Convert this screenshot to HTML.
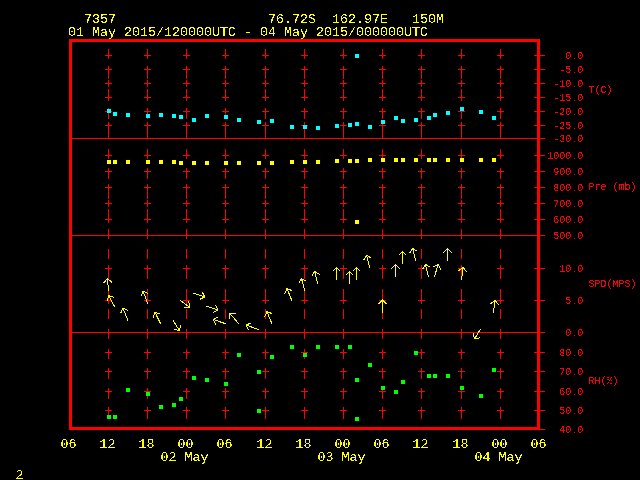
<!DOCTYPE html>
<html><head><meta charset="utf-8"><title>Meteogram 7357</title>
<style>
html,body{margin:0;padding:0;background:#000;overflow:hidden}
svg{display:block}
text{font-family:"Liberation Mono","DejaVu Sans Mono",monospace;white-space:pre}
.y{fill:#ffff00;font-size:13.333px}
.r{fill:#ff0000;font-size:10px}
</style></head><body>
<svg width="640" height="480" viewBox="0 0 640 480">
<defs><filter id="crisp" x="0" y="0" width="640" height="480" filterUnits="userSpaceOnUse" color-interpolation-filters="sRGB"><feComponentTransfer><feFuncA type="discrete" tableValues="0 1"/></feComponentTransfer></filter></defs>
<rect x="0" y="0" width="640" height="480" fill="#000"/>
<g shape-rendering="crispEdges">
<rect x="69" y="39" width="471" height="3" fill="#ff0000"/>
<rect x="69" y="427" width="471" height="3" fill="#ff0000"/>
<rect x="69" y="39" width="3" height="391" fill="#ff0000"/>
<rect x="537" y="39" width="3" height="391" fill="#ff0000"/>
<rect x="69" y="138" width="471" height="1" fill="#ff0000"/>
<rect x="69" y="235" width="471" height="1" fill="#ff0000"/>
<rect x="69" y="332" width="471" height="1" fill="#ff0000"/>
<rect x="108" y="49" width="1" height="10" fill="#ff0000"/>
<rect x="108" y="69" width="1" height="10" fill="#ff0000"/>
<rect x="108" y="89" width="1" height="10" fill="#ff0000"/>
<rect x="108" y="109" width="1" height="10" fill="#ff0000"/>
<rect x="108" y="129" width="1" height="10" fill="#ff0000"/>
<rect x="108" y="149" width="1" height="10" fill="#ff0000"/>
<rect x="108" y="169" width="1" height="10" fill="#ff0000"/>
<rect x="108" y="189" width="1" height="10" fill="#ff0000"/>
<rect x="108" y="209" width="1" height="10" fill="#ff0000"/>
<rect x="108" y="229" width="1" height="10" fill="#ff0000"/>
<rect x="108" y="249" width="1" height="10" fill="#ff0000"/>
<rect x="108" y="269" width="1" height="10" fill="#ff0000"/>
<rect x="108" y="289" width="1" height="10" fill="#ff0000"/>
<rect x="108" y="309" width="1" height="10" fill="#ff0000"/>
<rect x="108" y="329" width="1" height="10" fill="#ff0000"/>
<rect x="108" y="349" width="1" height="10" fill="#ff0000"/>
<rect x="108" y="369" width="1" height="10" fill="#ff0000"/>
<rect x="108" y="389" width="1" height="10" fill="#ff0000"/>
<rect x="108" y="409" width="1" height="10" fill="#ff0000"/>
<rect x="105" y="55" width="7" height="1" fill="#ff0000"/>
<rect x="108" y="52" width="1" height="7" fill="#ff0000"/>
<rect x="105" y="69" width="7" height="1" fill="#ff0000"/>
<rect x="108" y="66" width="1" height="7" fill="#ff0000"/>
<rect x="105" y="83" width="7" height="1" fill="#ff0000"/>
<rect x="108" y="80" width="1" height="7" fill="#ff0000"/>
<rect x="105" y="97" width="7" height="1" fill="#ff0000"/>
<rect x="108" y="94" width="1" height="7" fill="#ff0000"/>
<rect x="105" y="111" width="7" height="1" fill="#ff0000"/>
<rect x="108" y="108" width="1" height="7" fill="#ff0000"/>
<rect x="105" y="125" width="7" height="1" fill="#ff0000"/>
<rect x="108" y="122" width="1" height="7" fill="#ff0000"/>
<rect x="105" y="155" width="7" height="1" fill="#ff0000"/>
<rect x="108" y="152" width="1" height="7" fill="#ff0000"/>
<rect x="105" y="171" width="7" height="1" fill="#ff0000"/>
<rect x="108" y="168" width="1" height="7" fill="#ff0000"/>
<rect x="105" y="187" width="7" height="1" fill="#ff0000"/>
<rect x="108" y="184" width="1" height="7" fill="#ff0000"/>
<rect x="105" y="203" width="7" height="1" fill="#ff0000"/>
<rect x="108" y="200" width="1" height="7" fill="#ff0000"/>
<rect x="105" y="219" width="7" height="1" fill="#ff0000"/>
<rect x="108" y="216" width="1" height="7" fill="#ff0000"/>
<rect x="105" y="268" width="7" height="1" fill="#ff0000"/>
<rect x="108" y="265" width="1" height="7" fill="#ff0000"/>
<rect x="105" y="300" width="7" height="1" fill="#ff0000"/>
<rect x="108" y="297" width="1" height="7" fill="#ff0000"/>
<rect x="105" y="352" width="7" height="1" fill="#ff0000"/>
<rect x="108" y="349" width="1" height="7" fill="#ff0000"/>
<rect x="105" y="371" width="7" height="1" fill="#ff0000"/>
<rect x="108" y="368" width="1" height="7" fill="#ff0000"/>
<rect x="105" y="391" width="7" height="1" fill="#ff0000"/>
<rect x="108" y="388" width="1" height="7" fill="#ff0000"/>
<rect x="105" y="410" width="7" height="1" fill="#ff0000"/>
<rect x="108" y="407" width="1" height="7" fill="#ff0000"/>
<rect x="147" y="49" width="1" height="10" fill="#ff0000"/>
<rect x="147" y="69" width="1" height="10" fill="#ff0000"/>
<rect x="147" y="89" width="1" height="10" fill="#ff0000"/>
<rect x="147" y="109" width="1" height="10" fill="#ff0000"/>
<rect x="147" y="129" width="1" height="10" fill="#ff0000"/>
<rect x="147" y="149" width="1" height="10" fill="#ff0000"/>
<rect x="147" y="169" width="1" height="10" fill="#ff0000"/>
<rect x="147" y="189" width="1" height="10" fill="#ff0000"/>
<rect x="147" y="209" width="1" height="10" fill="#ff0000"/>
<rect x="147" y="229" width="1" height="10" fill="#ff0000"/>
<rect x="147" y="249" width="1" height="10" fill="#ff0000"/>
<rect x="147" y="269" width="1" height="10" fill="#ff0000"/>
<rect x="147" y="289" width="1" height="10" fill="#ff0000"/>
<rect x="147" y="309" width="1" height="10" fill="#ff0000"/>
<rect x="147" y="329" width="1" height="10" fill="#ff0000"/>
<rect x="147" y="349" width="1" height="10" fill="#ff0000"/>
<rect x="147" y="369" width="1" height="10" fill="#ff0000"/>
<rect x="147" y="389" width="1" height="10" fill="#ff0000"/>
<rect x="147" y="409" width="1" height="10" fill="#ff0000"/>
<rect x="144" y="55" width="7" height="1" fill="#ff0000"/>
<rect x="147" y="52" width="1" height="7" fill="#ff0000"/>
<rect x="144" y="69" width="7" height="1" fill="#ff0000"/>
<rect x="147" y="66" width="1" height="7" fill="#ff0000"/>
<rect x="144" y="83" width="7" height="1" fill="#ff0000"/>
<rect x="147" y="80" width="1" height="7" fill="#ff0000"/>
<rect x="144" y="97" width="7" height="1" fill="#ff0000"/>
<rect x="147" y="94" width="1" height="7" fill="#ff0000"/>
<rect x="144" y="111" width="7" height="1" fill="#ff0000"/>
<rect x="147" y="108" width="1" height="7" fill="#ff0000"/>
<rect x="144" y="125" width="7" height="1" fill="#ff0000"/>
<rect x="147" y="122" width="1" height="7" fill="#ff0000"/>
<rect x="144" y="155" width="7" height="1" fill="#ff0000"/>
<rect x="147" y="152" width="1" height="7" fill="#ff0000"/>
<rect x="144" y="171" width="7" height="1" fill="#ff0000"/>
<rect x="147" y="168" width="1" height="7" fill="#ff0000"/>
<rect x="144" y="187" width="7" height="1" fill="#ff0000"/>
<rect x="147" y="184" width="1" height="7" fill="#ff0000"/>
<rect x="144" y="203" width="7" height="1" fill="#ff0000"/>
<rect x="147" y="200" width="1" height="7" fill="#ff0000"/>
<rect x="144" y="219" width="7" height="1" fill="#ff0000"/>
<rect x="147" y="216" width="1" height="7" fill="#ff0000"/>
<rect x="144" y="268" width="7" height="1" fill="#ff0000"/>
<rect x="147" y="265" width="1" height="7" fill="#ff0000"/>
<rect x="144" y="300" width="7" height="1" fill="#ff0000"/>
<rect x="147" y="297" width="1" height="7" fill="#ff0000"/>
<rect x="144" y="352" width="7" height="1" fill="#ff0000"/>
<rect x="147" y="349" width="1" height="7" fill="#ff0000"/>
<rect x="144" y="371" width="7" height="1" fill="#ff0000"/>
<rect x="147" y="368" width="1" height="7" fill="#ff0000"/>
<rect x="144" y="391" width="7" height="1" fill="#ff0000"/>
<rect x="147" y="388" width="1" height="7" fill="#ff0000"/>
<rect x="144" y="410" width="7" height="1" fill="#ff0000"/>
<rect x="147" y="407" width="1" height="7" fill="#ff0000"/>
<rect x="186" y="49" width="1" height="10" fill="#ff0000"/>
<rect x="186" y="69" width="1" height="10" fill="#ff0000"/>
<rect x="186" y="89" width="1" height="10" fill="#ff0000"/>
<rect x="186" y="109" width="1" height="10" fill="#ff0000"/>
<rect x="186" y="129" width="1" height="10" fill="#ff0000"/>
<rect x="186" y="149" width="1" height="10" fill="#ff0000"/>
<rect x="186" y="169" width="1" height="10" fill="#ff0000"/>
<rect x="186" y="189" width="1" height="10" fill="#ff0000"/>
<rect x="186" y="209" width="1" height="10" fill="#ff0000"/>
<rect x="186" y="229" width="1" height="10" fill="#ff0000"/>
<rect x="186" y="249" width="1" height="10" fill="#ff0000"/>
<rect x="186" y="269" width="1" height="10" fill="#ff0000"/>
<rect x="186" y="289" width="1" height="10" fill="#ff0000"/>
<rect x="186" y="309" width="1" height="10" fill="#ff0000"/>
<rect x="186" y="329" width="1" height="10" fill="#ff0000"/>
<rect x="186" y="349" width="1" height="10" fill="#ff0000"/>
<rect x="186" y="369" width="1" height="10" fill="#ff0000"/>
<rect x="186" y="389" width="1" height="10" fill="#ff0000"/>
<rect x="186" y="409" width="1" height="10" fill="#ff0000"/>
<rect x="183" y="55" width="7" height="1" fill="#ff0000"/>
<rect x="186" y="52" width="1" height="7" fill="#ff0000"/>
<rect x="183" y="69" width="7" height="1" fill="#ff0000"/>
<rect x="186" y="66" width="1" height="7" fill="#ff0000"/>
<rect x="183" y="83" width="7" height="1" fill="#ff0000"/>
<rect x="186" y="80" width="1" height="7" fill="#ff0000"/>
<rect x="183" y="97" width="7" height="1" fill="#ff0000"/>
<rect x="186" y="94" width="1" height="7" fill="#ff0000"/>
<rect x="183" y="111" width="7" height="1" fill="#ff0000"/>
<rect x="186" y="108" width="1" height="7" fill="#ff0000"/>
<rect x="183" y="125" width="7" height="1" fill="#ff0000"/>
<rect x="186" y="122" width="1" height="7" fill="#ff0000"/>
<rect x="183" y="155" width="7" height="1" fill="#ff0000"/>
<rect x="186" y="152" width="1" height="7" fill="#ff0000"/>
<rect x="183" y="171" width="7" height="1" fill="#ff0000"/>
<rect x="186" y="168" width="1" height="7" fill="#ff0000"/>
<rect x="183" y="187" width="7" height="1" fill="#ff0000"/>
<rect x="186" y="184" width="1" height="7" fill="#ff0000"/>
<rect x="183" y="203" width="7" height="1" fill="#ff0000"/>
<rect x="186" y="200" width="1" height="7" fill="#ff0000"/>
<rect x="183" y="219" width="7" height="1" fill="#ff0000"/>
<rect x="186" y="216" width="1" height="7" fill="#ff0000"/>
<rect x="183" y="268" width="7" height="1" fill="#ff0000"/>
<rect x="186" y="265" width="1" height="7" fill="#ff0000"/>
<rect x="183" y="300" width="7" height="1" fill="#ff0000"/>
<rect x="186" y="297" width="1" height="7" fill="#ff0000"/>
<rect x="183" y="352" width="7" height="1" fill="#ff0000"/>
<rect x="186" y="349" width="1" height="7" fill="#ff0000"/>
<rect x="183" y="371" width="7" height="1" fill="#ff0000"/>
<rect x="186" y="368" width="1" height="7" fill="#ff0000"/>
<rect x="183" y="391" width="7" height="1" fill="#ff0000"/>
<rect x="186" y="388" width="1" height="7" fill="#ff0000"/>
<rect x="183" y="410" width="7" height="1" fill="#ff0000"/>
<rect x="186" y="407" width="1" height="7" fill="#ff0000"/>
<rect x="225" y="49" width="1" height="10" fill="#ff0000"/>
<rect x="225" y="69" width="1" height="10" fill="#ff0000"/>
<rect x="225" y="89" width="1" height="10" fill="#ff0000"/>
<rect x="225" y="109" width="1" height="10" fill="#ff0000"/>
<rect x="225" y="129" width="1" height="10" fill="#ff0000"/>
<rect x="225" y="149" width="1" height="10" fill="#ff0000"/>
<rect x="225" y="169" width="1" height="10" fill="#ff0000"/>
<rect x="225" y="189" width="1" height="10" fill="#ff0000"/>
<rect x="225" y="209" width="1" height="10" fill="#ff0000"/>
<rect x="225" y="229" width="1" height="10" fill="#ff0000"/>
<rect x="225" y="249" width="1" height="10" fill="#ff0000"/>
<rect x="225" y="269" width="1" height="10" fill="#ff0000"/>
<rect x="225" y="289" width="1" height="10" fill="#ff0000"/>
<rect x="225" y="309" width="1" height="10" fill="#ff0000"/>
<rect x="225" y="329" width="1" height="10" fill="#ff0000"/>
<rect x="225" y="349" width="1" height="10" fill="#ff0000"/>
<rect x="225" y="369" width="1" height="10" fill="#ff0000"/>
<rect x="225" y="389" width="1" height="10" fill="#ff0000"/>
<rect x="225" y="409" width="1" height="10" fill="#ff0000"/>
<rect x="222" y="55" width="7" height="1" fill="#ff0000"/>
<rect x="225" y="52" width="1" height="7" fill="#ff0000"/>
<rect x="222" y="69" width="7" height="1" fill="#ff0000"/>
<rect x="225" y="66" width="1" height="7" fill="#ff0000"/>
<rect x="222" y="83" width="7" height="1" fill="#ff0000"/>
<rect x="225" y="80" width="1" height="7" fill="#ff0000"/>
<rect x="222" y="97" width="7" height="1" fill="#ff0000"/>
<rect x="225" y="94" width="1" height="7" fill="#ff0000"/>
<rect x="222" y="111" width="7" height="1" fill="#ff0000"/>
<rect x="225" y="108" width="1" height="7" fill="#ff0000"/>
<rect x="222" y="125" width="7" height="1" fill="#ff0000"/>
<rect x="225" y="122" width="1" height="7" fill="#ff0000"/>
<rect x="222" y="155" width="7" height="1" fill="#ff0000"/>
<rect x="225" y="152" width="1" height="7" fill="#ff0000"/>
<rect x="222" y="171" width="7" height="1" fill="#ff0000"/>
<rect x="225" y="168" width="1" height="7" fill="#ff0000"/>
<rect x="222" y="187" width="7" height="1" fill="#ff0000"/>
<rect x="225" y="184" width="1" height="7" fill="#ff0000"/>
<rect x="222" y="203" width="7" height="1" fill="#ff0000"/>
<rect x="225" y="200" width="1" height="7" fill="#ff0000"/>
<rect x="222" y="219" width="7" height="1" fill="#ff0000"/>
<rect x="225" y="216" width="1" height="7" fill="#ff0000"/>
<rect x="222" y="268" width="7" height="1" fill="#ff0000"/>
<rect x="225" y="265" width="1" height="7" fill="#ff0000"/>
<rect x="222" y="300" width="7" height="1" fill="#ff0000"/>
<rect x="225" y="297" width="1" height="7" fill="#ff0000"/>
<rect x="222" y="352" width="7" height="1" fill="#ff0000"/>
<rect x="225" y="349" width="1" height="7" fill="#ff0000"/>
<rect x="222" y="371" width="7" height="1" fill="#ff0000"/>
<rect x="225" y="368" width="1" height="7" fill="#ff0000"/>
<rect x="222" y="391" width="7" height="1" fill="#ff0000"/>
<rect x="225" y="388" width="1" height="7" fill="#ff0000"/>
<rect x="222" y="410" width="7" height="1" fill="#ff0000"/>
<rect x="225" y="407" width="1" height="7" fill="#ff0000"/>
<rect x="265" y="49" width="1" height="10" fill="#ff0000"/>
<rect x="265" y="69" width="1" height="10" fill="#ff0000"/>
<rect x="265" y="89" width="1" height="10" fill="#ff0000"/>
<rect x="265" y="109" width="1" height="10" fill="#ff0000"/>
<rect x="265" y="129" width="1" height="10" fill="#ff0000"/>
<rect x="265" y="149" width="1" height="10" fill="#ff0000"/>
<rect x="265" y="169" width="1" height="10" fill="#ff0000"/>
<rect x="265" y="189" width="1" height="10" fill="#ff0000"/>
<rect x="265" y="209" width="1" height="10" fill="#ff0000"/>
<rect x="265" y="229" width="1" height="10" fill="#ff0000"/>
<rect x="265" y="249" width="1" height="10" fill="#ff0000"/>
<rect x="265" y="269" width="1" height="10" fill="#ff0000"/>
<rect x="265" y="289" width="1" height="10" fill="#ff0000"/>
<rect x="265" y="309" width="1" height="10" fill="#ff0000"/>
<rect x="265" y="329" width="1" height="10" fill="#ff0000"/>
<rect x="265" y="349" width="1" height="10" fill="#ff0000"/>
<rect x="265" y="369" width="1" height="10" fill="#ff0000"/>
<rect x="265" y="389" width="1" height="10" fill="#ff0000"/>
<rect x="265" y="409" width="1" height="10" fill="#ff0000"/>
<rect x="262" y="55" width="7" height="1" fill="#ff0000"/>
<rect x="265" y="52" width="1" height="7" fill="#ff0000"/>
<rect x="262" y="69" width="7" height="1" fill="#ff0000"/>
<rect x="265" y="66" width="1" height="7" fill="#ff0000"/>
<rect x="262" y="83" width="7" height="1" fill="#ff0000"/>
<rect x="265" y="80" width="1" height="7" fill="#ff0000"/>
<rect x="262" y="97" width="7" height="1" fill="#ff0000"/>
<rect x="265" y="94" width="1" height="7" fill="#ff0000"/>
<rect x="262" y="111" width="7" height="1" fill="#ff0000"/>
<rect x="265" y="108" width="1" height="7" fill="#ff0000"/>
<rect x="262" y="125" width="7" height="1" fill="#ff0000"/>
<rect x="265" y="122" width="1" height="7" fill="#ff0000"/>
<rect x="262" y="155" width="7" height="1" fill="#ff0000"/>
<rect x="265" y="152" width="1" height="7" fill="#ff0000"/>
<rect x="262" y="171" width="7" height="1" fill="#ff0000"/>
<rect x="265" y="168" width="1" height="7" fill="#ff0000"/>
<rect x="262" y="187" width="7" height="1" fill="#ff0000"/>
<rect x="265" y="184" width="1" height="7" fill="#ff0000"/>
<rect x="262" y="203" width="7" height="1" fill="#ff0000"/>
<rect x="265" y="200" width="1" height="7" fill="#ff0000"/>
<rect x="262" y="219" width="7" height="1" fill="#ff0000"/>
<rect x="265" y="216" width="1" height="7" fill="#ff0000"/>
<rect x="262" y="268" width="7" height="1" fill="#ff0000"/>
<rect x="265" y="265" width="1" height="7" fill="#ff0000"/>
<rect x="262" y="300" width="7" height="1" fill="#ff0000"/>
<rect x="265" y="297" width="1" height="7" fill="#ff0000"/>
<rect x="262" y="352" width="7" height="1" fill="#ff0000"/>
<rect x="265" y="349" width="1" height="7" fill="#ff0000"/>
<rect x="262" y="371" width="7" height="1" fill="#ff0000"/>
<rect x="265" y="368" width="1" height="7" fill="#ff0000"/>
<rect x="262" y="391" width="7" height="1" fill="#ff0000"/>
<rect x="265" y="388" width="1" height="7" fill="#ff0000"/>
<rect x="262" y="410" width="7" height="1" fill="#ff0000"/>
<rect x="265" y="407" width="1" height="7" fill="#ff0000"/>
<rect x="304" y="49" width="1" height="10" fill="#ff0000"/>
<rect x="304" y="69" width="1" height="10" fill="#ff0000"/>
<rect x="304" y="89" width="1" height="10" fill="#ff0000"/>
<rect x="304" y="109" width="1" height="10" fill="#ff0000"/>
<rect x="304" y="129" width="1" height="10" fill="#ff0000"/>
<rect x="304" y="149" width="1" height="10" fill="#ff0000"/>
<rect x="304" y="169" width="1" height="10" fill="#ff0000"/>
<rect x="304" y="189" width="1" height="10" fill="#ff0000"/>
<rect x="304" y="209" width="1" height="10" fill="#ff0000"/>
<rect x="304" y="229" width="1" height="10" fill="#ff0000"/>
<rect x="304" y="249" width="1" height="10" fill="#ff0000"/>
<rect x="304" y="269" width="1" height="10" fill="#ff0000"/>
<rect x="304" y="289" width="1" height="10" fill="#ff0000"/>
<rect x="304" y="309" width="1" height="10" fill="#ff0000"/>
<rect x="304" y="329" width="1" height="10" fill="#ff0000"/>
<rect x="304" y="349" width="1" height="10" fill="#ff0000"/>
<rect x="304" y="369" width="1" height="10" fill="#ff0000"/>
<rect x="304" y="389" width="1" height="10" fill="#ff0000"/>
<rect x="304" y="409" width="1" height="10" fill="#ff0000"/>
<rect x="301" y="55" width="7" height="1" fill="#ff0000"/>
<rect x="304" y="52" width="1" height="7" fill="#ff0000"/>
<rect x="301" y="69" width="7" height="1" fill="#ff0000"/>
<rect x="304" y="66" width="1" height="7" fill="#ff0000"/>
<rect x="301" y="83" width="7" height="1" fill="#ff0000"/>
<rect x="304" y="80" width="1" height="7" fill="#ff0000"/>
<rect x="301" y="97" width="7" height="1" fill="#ff0000"/>
<rect x="304" y="94" width="1" height="7" fill="#ff0000"/>
<rect x="301" y="111" width="7" height="1" fill="#ff0000"/>
<rect x="304" y="108" width="1" height="7" fill="#ff0000"/>
<rect x="301" y="125" width="7" height="1" fill="#ff0000"/>
<rect x="304" y="122" width="1" height="7" fill="#ff0000"/>
<rect x="301" y="155" width="7" height="1" fill="#ff0000"/>
<rect x="304" y="152" width="1" height="7" fill="#ff0000"/>
<rect x="301" y="171" width="7" height="1" fill="#ff0000"/>
<rect x="304" y="168" width="1" height="7" fill="#ff0000"/>
<rect x="301" y="187" width="7" height="1" fill="#ff0000"/>
<rect x="304" y="184" width="1" height="7" fill="#ff0000"/>
<rect x="301" y="203" width="7" height="1" fill="#ff0000"/>
<rect x="304" y="200" width="1" height="7" fill="#ff0000"/>
<rect x="301" y="219" width="7" height="1" fill="#ff0000"/>
<rect x="304" y="216" width="1" height="7" fill="#ff0000"/>
<rect x="301" y="268" width="7" height="1" fill="#ff0000"/>
<rect x="304" y="265" width="1" height="7" fill="#ff0000"/>
<rect x="301" y="300" width="7" height="1" fill="#ff0000"/>
<rect x="304" y="297" width="1" height="7" fill="#ff0000"/>
<rect x="301" y="352" width="7" height="1" fill="#ff0000"/>
<rect x="304" y="349" width="1" height="7" fill="#ff0000"/>
<rect x="301" y="371" width="7" height="1" fill="#ff0000"/>
<rect x="304" y="368" width="1" height="7" fill="#ff0000"/>
<rect x="301" y="391" width="7" height="1" fill="#ff0000"/>
<rect x="304" y="388" width="1" height="7" fill="#ff0000"/>
<rect x="301" y="410" width="7" height="1" fill="#ff0000"/>
<rect x="304" y="407" width="1" height="7" fill="#ff0000"/>
<rect x="343" y="49" width="1" height="10" fill="#ff0000"/>
<rect x="343" y="69" width="1" height="10" fill="#ff0000"/>
<rect x="343" y="89" width="1" height="10" fill="#ff0000"/>
<rect x="343" y="109" width="1" height="10" fill="#ff0000"/>
<rect x="343" y="129" width="1" height="10" fill="#ff0000"/>
<rect x="343" y="149" width="1" height="10" fill="#ff0000"/>
<rect x="343" y="169" width="1" height="10" fill="#ff0000"/>
<rect x="343" y="189" width="1" height="10" fill="#ff0000"/>
<rect x="343" y="209" width="1" height="10" fill="#ff0000"/>
<rect x="343" y="229" width="1" height="10" fill="#ff0000"/>
<rect x="343" y="249" width="1" height="10" fill="#ff0000"/>
<rect x="343" y="269" width="1" height="10" fill="#ff0000"/>
<rect x="343" y="289" width="1" height="10" fill="#ff0000"/>
<rect x="343" y="309" width="1" height="10" fill="#ff0000"/>
<rect x="343" y="329" width="1" height="10" fill="#ff0000"/>
<rect x="343" y="349" width="1" height="10" fill="#ff0000"/>
<rect x="343" y="369" width="1" height="10" fill="#ff0000"/>
<rect x="343" y="389" width="1" height="10" fill="#ff0000"/>
<rect x="343" y="409" width="1" height="10" fill="#ff0000"/>
<rect x="340" y="55" width="7" height="1" fill="#ff0000"/>
<rect x="343" y="52" width="1" height="7" fill="#ff0000"/>
<rect x="340" y="69" width="7" height="1" fill="#ff0000"/>
<rect x="343" y="66" width="1" height="7" fill="#ff0000"/>
<rect x="340" y="83" width="7" height="1" fill="#ff0000"/>
<rect x="343" y="80" width="1" height="7" fill="#ff0000"/>
<rect x="340" y="97" width="7" height="1" fill="#ff0000"/>
<rect x="343" y="94" width="1" height="7" fill="#ff0000"/>
<rect x="340" y="111" width="7" height="1" fill="#ff0000"/>
<rect x="343" y="108" width="1" height="7" fill="#ff0000"/>
<rect x="340" y="125" width="7" height="1" fill="#ff0000"/>
<rect x="343" y="122" width="1" height="7" fill="#ff0000"/>
<rect x="340" y="155" width="7" height="1" fill="#ff0000"/>
<rect x="343" y="152" width="1" height="7" fill="#ff0000"/>
<rect x="340" y="171" width="7" height="1" fill="#ff0000"/>
<rect x="343" y="168" width="1" height="7" fill="#ff0000"/>
<rect x="340" y="187" width="7" height="1" fill="#ff0000"/>
<rect x="343" y="184" width="1" height="7" fill="#ff0000"/>
<rect x="340" y="203" width="7" height="1" fill="#ff0000"/>
<rect x="343" y="200" width="1" height="7" fill="#ff0000"/>
<rect x="340" y="219" width="7" height="1" fill="#ff0000"/>
<rect x="343" y="216" width="1" height="7" fill="#ff0000"/>
<rect x="340" y="268" width="7" height="1" fill="#ff0000"/>
<rect x="343" y="265" width="1" height="7" fill="#ff0000"/>
<rect x="340" y="300" width="7" height="1" fill="#ff0000"/>
<rect x="343" y="297" width="1" height="7" fill="#ff0000"/>
<rect x="340" y="352" width="7" height="1" fill="#ff0000"/>
<rect x="343" y="349" width="1" height="7" fill="#ff0000"/>
<rect x="340" y="371" width="7" height="1" fill="#ff0000"/>
<rect x="343" y="368" width="1" height="7" fill="#ff0000"/>
<rect x="340" y="391" width="7" height="1" fill="#ff0000"/>
<rect x="343" y="388" width="1" height="7" fill="#ff0000"/>
<rect x="340" y="410" width="7" height="1" fill="#ff0000"/>
<rect x="343" y="407" width="1" height="7" fill="#ff0000"/>
<rect x="382" y="49" width="1" height="10" fill="#ff0000"/>
<rect x="382" y="69" width="1" height="10" fill="#ff0000"/>
<rect x="382" y="89" width="1" height="10" fill="#ff0000"/>
<rect x="382" y="109" width="1" height="10" fill="#ff0000"/>
<rect x="382" y="129" width="1" height="10" fill="#ff0000"/>
<rect x="382" y="149" width="1" height="10" fill="#ff0000"/>
<rect x="382" y="169" width="1" height="10" fill="#ff0000"/>
<rect x="382" y="189" width="1" height="10" fill="#ff0000"/>
<rect x="382" y="209" width="1" height="10" fill="#ff0000"/>
<rect x="382" y="229" width="1" height="10" fill="#ff0000"/>
<rect x="382" y="249" width="1" height="10" fill="#ff0000"/>
<rect x="382" y="269" width="1" height="10" fill="#ff0000"/>
<rect x="382" y="289" width="1" height="10" fill="#ff0000"/>
<rect x="382" y="309" width="1" height="10" fill="#ff0000"/>
<rect x="382" y="329" width="1" height="10" fill="#ff0000"/>
<rect x="382" y="349" width="1" height="10" fill="#ff0000"/>
<rect x="382" y="369" width="1" height="10" fill="#ff0000"/>
<rect x="382" y="389" width="1" height="10" fill="#ff0000"/>
<rect x="382" y="409" width="1" height="10" fill="#ff0000"/>
<rect x="379" y="55" width="7" height="1" fill="#ff0000"/>
<rect x="382" y="52" width="1" height="7" fill="#ff0000"/>
<rect x="379" y="69" width="7" height="1" fill="#ff0000"/>
<rect x="382" y="66" width="1" height="7" fill="#ff0000"/>
<rect x="379" y="83" width="7" height="1" fill="#ff0000"/>
<rect x="382" y="80" width="1" height="7" fill="#ff0000"/>
<rect x="379" y="97" width="7" height="1" fill="#ff0000"/>
<rect x="382" y="94" width="1" height="7" fill="#ff0000"/>
<rect x="379" y="111" width="7" height="1" fill="#ff0000"/>
<rect x="382" y="108" width="1" height="7" fill="#ff0000"/>
<rect x="379" y="125" width="7" height="1" fill="#ff0000"/>
<rect x="382" y="122" width="1" height="7" fill="#ff0000"/>
<rect x="379" y="155" width="7" height="1" fill="#ff0000"/>
<rect x="382" y="152" width="1" height="7" fill="#ff0000"/>
<rect x="379" y="171" width="7" height="1" fill="#ff0000"/>
<rect x="382" y="168" width="1" height="7" fill="#ff0000"/>
<rect x="379" y="187" width="7" height="1" fill="#ff0000"/>
<rect x="382" y="184" width="1" height="7" fill="#ff0000"/>
<rect x="379" y="203" width="7" height="1" fill="#ff0000"/>
<rect x="382" y="200" width="1" height="7" fill="#ff0000"/>
<rect x="379" y="219" width="7" height="1" fill="#ff0000"/>
<rect x="382" y="216" width="1" height="7" fill="#ff0000"/>
<rect x="379" y="268" width="7" height="1" fill="#ff0000"/>
<rect x="382" y="265" width="1" height="7" fill="#ff0000"/>
<rect x="379" y="300" width="7" height="1" fill="#ff0000"/>
<rect x="382" y="297" width="1" height="7" fill="#ff0000"/>
<rect x="379" y="352" width="7" height="1" fill="#ff0000"/>
<rect x="382" y="349" width="1" height="7" fill="#ff0000"/>
<rect x="379" y="371" width="7" height="1" fill="#ff0000"/>
<rect x="382" y="368" width="1" height="7" fill="#ff0000"/>
<rect x="379" y="391" width="7" height="1" fill="#ff0000"/>
<rect x="382" y="388" width="1" height="7" fill="#ff0000"/>
<rect x="379" y="410" width="7" height="1" fill="#ff0000"/>
<rect x="382" y="407" width="1" height="7" fill="#ff0000"/>
<rect x="421" y="49" width="1" height="10" fill="#ff0000"/>
<rect x="421" y="69" width="1" height="10" fill="#ff0000"/>
<rect x="421" y="89" width="1" height="10" fill="#ff0000"/>
<rect x="421" y="109" width="1" height="10" fill="#ff0000"/>
<rect x="421" y="129" width="1" height="10" fill="#ff0000"/>
<rect x="421" y="149" width="1" height="10" fill="#ff0000"/>
<rect x="421" y="169" width="1" height="10" fill="#ff0000"/>
<rect x="421" y="189" width="1" height="10" fill="#ff0000"/>
<rect x="421" y="209" width="1" height="10" fill="#ff0000"/>
<rect x="421" y="229" width="1" height="10" fill="#ff0000"/>
<rect x="421" y="249" width="1" height="10" fill="#ff0000"/>
<rect x="421" y="269" width="1" height="10" fill="#ff0000"/>
<rect x="421" y="289" width="1" height="10" fill="#ff0000"/>
<rect x="421" y="309" width="1" height="10" fill="#ff0000"/>
<rect x="421" y="329" width="1" height="10" fill="#ff0000"/>
<rect x="421" y="349" width="1" height="10" fill="#ff0000"/>
<rect x="421" y="369" width="1" height="10" fill="#ff0000"/>
<rect x="421" y="389" width="1" height="10" fill="#ff0000"/>
<rect x="421" y="409" width="1" height="10" fill="#ff0000"/>
<rect x="418" y="55" width="7" height="1" fill="#ff0000"/>
<rect x="421" y="52" width="1" height="7" fill="#ff0000"/>
<rect x="418" y="69" width="7" height="1" fill="#ff0000"/>
<rect x="421" y="66" width="1" height="7" fill="#ff0000"/>
<rect x="418" y="83" width="7" height="1" fill="#ff0000"/>
<rect x="421" y="80" width="1" height="7" fill="#ff0000"/>
<rect x="418" y="97" width="7" height="1" fill="#ff0000"/>
<rect x="421" y="94" width="1" height="7" fill="#ff0000"/>
<rect x="418" y="111" width="7" height="1" fill="#ff0000"/>
<rect x="421" y="108" width="1" height="7" fill="#ff0000"/>
<rect x="418" y="125" width="7" height="1" fill="#ff0000"/>
<rect x="421" y="122" width="1" height="7" fill="#ff0000"/>
<rect x="418" y="155" width="7" height="1" fill="#ff0000"/>
<rect x="421" y="152" width="1" height="7" fill="#ff0000"/>
<rect x="418" y="171" width="7" height="1" fill="#ff0000"/>
<rect x="421" y="168" width="1" height="7" fill="#ff0000"/>
<rect x="418" y="187" width="7" height="1" fill="#ff0000"/>
<rect x="421" y="184" width="1" height="7" fill="#ff0000"/>
<rect x="418" y="203" width="7" height="1" fill="#ff0000"/>
<rect x="421" y="200" width="1" height="7" fill="#ff0000"/>
<rect x="418" y="219" width="7" height="1" fill="#ff0000"/>
<rect x="421" y="216" width="1" height="7" fill="#ff0000"/>
<rect x="418" y="268" width="7" height="1" fill="#ff0000"/>
<rect x="421" y="265" width="1" height="7" fill="#ff0000"/>
<rect x="418" y="300" width="7" height="1" fill="#ff0000"/>
<rect x="421" y="297" width="1" height="7" fill="#ff0000"/>
<rect x="418" y="352" width="7" height="1" fill="#ff0000"/>
<rect x="421" y="349" width="1" height="7" fill="#ff0000"/>
<rect x="418" y="371" width="7" height="1" fill="#ff0000"/>
<rect x="421" y="368" width="1" height="7" fill="#ff0000"/>
<rect x="418" y="391" width="7" height="1" fill="#ff0000"/>
<rect x="421" y="388" width="1" height="7" fill="#ff0000"/>
<rect x="418" y="410" width="7" height="1" fill="#ff0000"/>
<rect x="421" y="407" width="1" height="7" fill="#ff0000"/>
<rect x="461" y="49" width="1" height="10" fill="#ff0000"/>
<rect x="461" y="69" width="1" height="10" fill="#ff0000"/>
<rect x="461" y="89" width="1" height="10" fill="#ff0000"/>
<rect x="461" y="109" width="1" height="10" fill="#ff0000"/>
<rect x="461" y="129" width="1" height="10" fill="#ff0000"/>
<rect x="461" y="149" width="1" height="10" fill="#ff0000"/>
<rect x="461" y="169" width="1" height="10" fill="#ff0000"/>
<rect x="461" y="189" width="1" height="10" fill="#ff0000"/>
<rect x="461" y="209" width="1" height="10" fill="#ff0000"/>
<rect x="461" y="229" width="1" height="10" fill="#ff0000"/>
<rect x="461" y="249" width="1" height="10" fill="#ff0000"/>
<rect x="461" y="269" width="1" height="10" fill="#ff0000"/>
<rect x="461" y="289" width="1" height="10" fill="#ff0000"/>
<rect x="461" y="309" width="1" height="10" fill="#ff0000"/>
<rect x="461" y="329" width="1" height="10" fill="#ff0000"/>
<rect x="461" y="349" width="1" height="10" fill="#ff0000"/>
<rect x="461" y="369" width="1" height="10" fill="#ff0000"/>
<rect x="461" y="389" width="1" height="10" fill="#ff0000"/>
<rect x="461" y="409" width="1" height="10" fill="#ff0000"/>
<rect x="458" y="55" width="7" height="1" fill="#ff0000"/>
<rect x="461" y="52" width="1" height="7" fill="#ff0000"/>
<rect x="458" y="69" width="7" height="1" fill="#ff0000"/>
<rect x="461" y="66" width="1" height="7" fill="#ff0000"/>
<rect x="458" y="83" width="7" height="1" fill="#ff0000"/>
<rect x="461" y="80" width="1" height="7" fill="#ff0000"/>
<rect x="458" y="97" width="7" height="1" fill="#ff0000"/>
<rect x="461" y="94" width="1" height="7" fill="#ff0000"/>
<rect x="458" y="111" width="7" height="1" fill="#ff0000"/>
<rect x="461" y="108" width="1" height="7" fill="#ff0000"/>
<rect x="458" y="125" width="7" height="1" fill="#ff0000"/>
<rect x="461" y="122" width="1" height="7" fill="#ff0000"/>
<rect x="458" y="155" width="7" height="1" fill="#ff0000"/>
<rect x="461" y="152" width="1" height="7" fill="#ff0000"/>
<rect x="458" y="171" width="7" height="1" fill="#ff0000"/>
<rect x="461" y="168" width="1" height="7" fill="#ff0000"/>
<rect x="458" y="187" width="7" height="1" fill="#ff0000"/>
<rect x="461" y="184" width="1" height="7" fill="#ff0000"/>
<rect x="458" y="203" width="7" height="1" fill="#ff0000"/>
<rect x="461" y="200" width="1" height="7" fill="#ff0000"/>
<rect x="458" y="219" width="7" height="1" fill="#ff0000"/>
<rect x="461" y="216" width="1" height="7" fill="#ff0000"/>
<rect x="458" y="268" width="7" height="1" fill="#ff0000"/>
<rect x="461" y="265" width="1" height="7" fill="#ff0000"/>
<rect x="458" y="300" width="7" height="1" fill="#ff0000"/>
<rect x="461" y="297" width="1" height="7" fill="#ff0000"/>
<rect x="458" y="352" width="7" height="1" fill="#ff0000"/>
<rect x="461" y="349" width="1" height="7" fill="#ff0000"/>
<rect x="458" y="371" width="7" height="1" fill="#ff0000"/>
<rect x="461" y="368" width="1" height="7" fill="#ff0000"/>
<rect x="458" y="391" width="7" height="1" fill="#ff0000"/>
<rect x="461" y="388" width="1" height="7" fill="#ff0000"/>
<rect x="458" y="410" width="7" height="1" fill="#ff0000"/>
<rect x="461" y="407" width="1" height="7" fill="#ff0000"/>
<rect x="500" y="49" width="1" height="10" fill="#ff0000"/>
<rect x="500" y="69" width="1" height="10" fill="#ff0000"/>
<rect x="500" y="89" width="1" height="10" fill="#ff0000"/>
<rect x="500" y="109" width="1" height="10" fill="#ff0000"/>
<rect x="500" y="129" width="1" height="10" fill="#ff0000"/>
<rect x="500" y="149" width="1" height="10" fill="#ff0000"/>
<rect x="500" y="169" width="1" height="10" fill="#ff0000"/>
<rect x="500" y="189" width="1" height="10" fill="#ff0000"/>
<rect x="500" y="209" width="1" height="10" fill="#ff0000"/>
<rect x="500" y="229" width="1" height="10" fill="#ff0000"/>
<rect x="500" y="249" width="1" height="10" fill="#ff0000"/>
<rect x="500" y="269" width="1" height="10" fill="#ff0000"/>
<rect x="500" y="289" width="1" height="10" fill="#ff0000"/>
<rect x="500" y="309" width="1" height="10" fill="#ff0000"/>
<rect x="500" y="329" width="1" height="10" fill="#ff0000"/>
<rect x="500" y="349" width="1" height="10" fill="#ff0000"/>
<rect x="500" y="369" width="1" height="10" fill="#ff0000"/>
<rect x="500" y="389" width="1" height="10" fill="#ff0000"/>
<rect x="500" y="409" width="1" height="10" fill="#ff0000"/>
<rect x="497" y="55" width="7" height="1" fill="#ff0000"/>
<rect x="500" y="52" width="1" height="7" fill="#ff0000"/>
<rect x="497" y="69" width="7" height="1" fill="#ff0000"/>
<rect x="500" y="66" width="1" height="7" fill="#ff0000"/>
<rect x="497" y="83" width="7" height="1" fill="#ff0000"/>
<rect x="500" y="80" width="1" height="7" fill="#ff0000"/>
<rect x="497" y="97" width="7" height="1" fill="#ff0000"/>
<rect x="500" y="94" width="1" height="7" fill="#ff0000"/>
<rect x="497" y="111" width="7" height="1" fill="#ff0000"/>
<rect x="500" y="108" width="1" height="7" fill="#ff0000"/>
<rect x="497" y="125" width="7" height="1" fill="#ff0000"/>
<rect x="500" y="122" width="1" height="7" fill="#ff0000"/>
<rect x="497" y="155" width="7" height="1" fill="#ff0000"/>
<rect x="500" y="152" width="1" height="7" fill="#ff0000"/>
<rect x="497" y="171" width="7" height="1" fill="#ff0000"/>
<rect x="500" y="168" width="1" height="7" fill="#ff0000"/>
<rect x="497" y="187" width="7" height="1" fill="#ff0000"/>
<rect x="500" y="184" width="1" height="7" fill="#ff0000"/>
<rect x="497" y="203" width="7" height="1" fill="#ff0000"/>
<rect x="500" y="200" width="1" height="7" fill="#ff0000"/>
<rect x="497" y="219" width="7" height="1" fill="#ff0000"/>
<rect x="500" y="216" width="1" height="7" fill="#ff0000"/>
<rect x="497" y="268" width="7" height="1" fill="#ff0000"/>
<rect x="500" y="265" width="1" height="7" fill="#ff0000"/>
<rect x="497" y="300" width="7" height="1" fill="#ff0000"/>
<rect x="500" y="297" width="1" height="7" fill="#ff0000"/>
<rect x="497" y="352" width="7" height="1" fill="#ff0000"/>
<rect x="500" y="349" width="1" height="7" fill="#ff0000"/>
<rect x="497" y="371" width="7" height="1" fill="#ff0000"/>
<rect x="500" y="368" width="1" height="7" fill="#ff0000"/>
<rect x="497" y="391" width="7" height="1" fill="#ff0000"/>
<rect x="500" y="388" width="1" height="7" fill="#ff0000"/>
<rect x="497" y="410" width="7" height="1" fill="#ff0000"/>
<rect x="500" y="407" width="1" height="7" fill="#ff0000"/>
<rect x="534" y="55" width="11" height="1" fill="#ff0000"/>
<rect x="534" y="69" width="11" height="1" fill="#ff0000"/>
<rect x="534" y="83" width="11" height="1" fill="#ff0000"/>
<rect x="534" y="97" width="11" height="1" fill="#ff0000"/>
<rect x="534" y="111" width="11" height="1" fill="#ff0000"/>
<rect x="534" y="125" width="11" height="1" fill="#ff0000"/>
<rect x="534" y="155" width="11" height="1" fill="#ff0000"/>
<rect x="534" y="171" width="11" height="1" fill="#ff0000"/>
<rect x="534" y="187" width="11" height="1" fill="#ff0000"/>
<rect x="534" y="203" width="11" height="1" fill="#ff0000"/>
<rect x="534" y="219" width="11" height="1" fill="#ff0000"/>
<rect x="534" y="268" width="11" height="1" fill="#ff0000"/>
<rect x="534" y="300" width="11" height="1" fill="#ff0000"/>
<rect x="534" y="352" width="11" height="1" fill="#ff0000"/>
<rect x="534" y="371" width="11" height="1" fill="#ff0000"/>
<rect x="534" y="391" width="11" height="1" fill="#ff0000"/>
<rect x="534" y="410" width="11" height="1" fill="#ff0000"/>
<rect x="534" y="138" width="11" height="1" fill="#ff0000"/>
<rect x="534" y="235" width="11" height="1" fill="#ff0000"/>
<rect x="534" y="332" width="11" height="1" fill="#ff0000"/>
<rect x="534" y="429" width="11" height="1" fill="#ff0000"/>
<rect x="107" y="109" width="4" height="4" fill="#00ffff"/>
<rect x="107" y="160" width="4" height="4" fill="#ffff00"/>
<rect x="107" y="415" width="4" height="4" fill="#00ff00"/>
<rect x="113" y="112" width="4" height="4" fill="#00ffff"/>
<rect x="113" y="160" width="4" height="4" fill="#ffff00"/>
<rect x="113" y="415" width="4" height="4" fill="#00ff00"/>
<rect x="126" y="113" width="4" height="4" fill="#00ffff"/>
<rect x="126" y="160" width="4" height="4" fill="#ffff00"/>
<rect x="126" y="388" width="4" height="4" fill="#00ff00"/>
<rect x="146" y="114" width="4" height="4" fill="#00ffff"/>
<rect x="146" y="160" width="4" height="4" fill="#ffff00"/>
<rect x="146" y="392" width="4" height="4" fill="#00ff00"/>
<rect x="159" y="113" width="4" height="4" fill="#00ffff"/>
<rect x="159" y="160" width="4" height="4" fill="#ffff00"/>
<rect x="159" y="405" width="4" height="4" fill="#00ff00"/>
<rect x="172" y="114" width="4" height="4" fill="#00ffff"/>
<rect x="172" y="160" width="4" height="4" fill="#ffff00"/>
<rect x="172" y="403" width="4" height="4" fill="#00ff00"/>
<rect x="179" y="115" width="4" height="4" fill="#00ffff"/>
<rect x="179" y="161" width="4" height="4" fill="#ffff00"/>
<rect x="179" y="397" width="4" height="4" fill="#00ff00"/>
<rect x="192" y="118" width="4" height="4" fill="#00ffff"/>
<rect x="192" y="161" width="4" height="4" fill="#ffff00"/>
<rect x="192" y="376" width="4" height="4" fill="#00ff00"/>
<rect x="205" y="114" width="4" height="4" fill="#00ffff"/>
<rect x="205" y="161" width="4" height="4" fill="#ffff00"/>
<rect x="205" y="378" width="4" height="4" fill="#00ff00"/>
<rect x="224" y="115" width="4" height="4" fill="#00ffff"/>
<rect x="224" y="161" width="4" height="4" fill="#ffff00"/>
<rect x="224" y="382" width="4" height="4" fill="#00ff00"/>
<rect x="237" y="118" width="4" height="4" fill="#00ffff"/>
<rect x="237" y="161" width="4" height="4" fill="#ffff00"/>
<rect x="237" y="353" width="4" height="4" fill="#00ff00"/>
<rect x="257" y="120" width="4" height="4" fill="#00ffff"/>
<rect x="257" y="161" width="4" height="4" fill="#ffff00"/>
<rect x="257" y="370" width="4" height="4" fill="#00ff00"/>
<rect x="270" y="119" width="4" height="4" fill="#00ffff"/>
<rect x="270" y="161" width="4" height="4" fill="#ffff00"/>
<rect x="270" y="355" width="4" height="4" fill="#00ff00"/>
<rect x="290" y="125" width="4" height="4" fill="#00ffff"/>
<rect x="290" y="160" width="4" height="4" fill="#ffff00"/>
<rect x="290" y="345" width="4" height="4" fill="#00ff00"/>
<rect x="303" y="125" width="4" height="4" fill="#00ffff"/>
<rect x="303" y="160" width="4" height="4" fill="#ffff00"/>
<rect x="303" y="353" width="4" height="4" fill="#00ff00"/>
<rect x="316" y="126" width="4" height="4" fill="#00ffff"/>
<rect x="316" y="160" width="4" height="4" fill="#ffff00"/>
<rect x="316" y="345" width="4" height="4" fill="#00ff00"/>
<rect x="335" y="124" width="4" height="4" fill="#00ffff"/>
<rect x="335" y="159" width="4" height="4" fill="#ffff00"/>
<rect x="335" y="345" width="4" height="4" fill="#00ff00"/>
<rect x="348" y="123" width="4" height="4" fill="#00ffff"/>
<rect x="348" y="159" width="4" height="4" fill="#ffff00"/>
<rect x="348" y="345" width="4" height="4" fill="#00ff00"/>
<rect x="355" y="122" width="4" height="4" fill="#00ffff"/>
<rect x="355" y="159" width="4" height="4" fill="#ffff00"/>
<rect x="355" y="378" width="4" height="4" fill="#00ff00"/>
<rect x="368" y="125" width="4" height="4" fill="#00ffff"/>
<rect x="368" y="158" width="4" height="4" fill="#ffff00"/>
<rect x="368" y="363" width="4" height="4" fill="#00ff00"/>
<rect x="381" y="120" width="4" height="4" fill="#00ffff"/>
<rect x="381" y="158" width="4" height="4" fill="#ffff00"/>
<rect x="381" y="386" width="4" height="4" fill="#00ff00"/>
<rect x="394" y="116" width="4" height="4" fill="#00ffff"/>
<rect x="394" y="158" width="4" height="4" fill="#ffff00"/>
<rect x="394" y="390" width="4" height="4" fill="#00ff00"/>
<rect x="401" y="119" width="4" height="4" fill="#00ffff"/>
<rect x="401" y="158" width="4" height="4" fill="#ffff00"/>
<rect x="401" y="380" width="4" height="4" fill="#00ff00"/>
<rect x="414" y="118" width="4" height="4" fill="#00ffff"/>
<rect x="414" y="158" width="4" height="4" fill="#ffff00"/>
<rect x="414" y="351" width="4" height="4" fill="#00ff00"/>
<rect x="427" y="116" width="4" height="4" fill="#00ffff"/>
<rect x="427" y="158" width="4" height="4" fill="#ffff00"/>
<rect x="427" y="374" width="4" height="4" fill="#00ff00"/>
<rect x="433" y="113" width="4" height="4" fill="#00ffff"/>
<rect x="433" y="158" width="4" height="4" fill="#ffff00"/>
<rect x="433" y="374" width="4" height="4" fill="#00ff00"/>
<rect x="446" y="111" width="4" height="4" fill="#00ffff"/>
<rect x="446" y="158" width="4" height="4" fill="#ffff00"/>
<rect x="446" y="374" width="4" height="4" fill="#00ff00"/>
<rect x="460" y="107" width="4" height="4" fill="#00ffff"/>
<rect x="460" y="158" width="4" height="4" fill="#ffff00"/>
<rect x="460" y="386" width="4" height="4" fill="#00ff00"/>
<rect x="479" y="110" width="4" height="4" fill="#00ffff"/>
<rect x="479" y="158" width="4" height="4" fill="#ffff00"/>
<rect x="479" y="394" width="4" height="4" fill="#00ff00"/>
<rect x="492" y="116" width="4" height="4" fill="#00ffff"/>
<rect x="492" y="158" width="4" height="4" fill="#ffff00"/>
<rect x="492" y="368" width="4" height="4" fill="#00ff00"/>
<rect x="355" y="54" width="4" height="4" fill="#00ffff"/>
<rect x="355" y="220" width="4" height="4" fill="#ffff00"/>
<rect x="355" y="417" width="4" height="4" fill="#00ff00"/>
<rect x="257" y="409" width="4" height="4" fill="#00ff00"/>
<path d="M108.50 290.60L107.50 278.50M103.75 282.93L107.50 278.50L111.93 282.25M114.75 306.90L108.75 295.60M107.05 301.15L108.75 295.60L114.30 297.30M128.10 321.00L122.90 308.10M120.63 313.44L122.90 308.10L128.24 310.37M147.75 303.75L143.10 291.25M140.69 296.52L143.10 291.25L148.37 293.66M160.60 323.75L155.00 312.25M153.11 317.73L155.00 312.25L160.48 314.14M173.10 320.25L179.40 330.60M180.77 324.96L179.40 330.60L173.76 329.23M180.00 300.10L189.60 307.20M188.74 301.46L189.60 307.20L183.86 308.06M193.10 293.10L204.75 296.90M202.12 291.73L204.75 296.90L199.58 299.53M206.25 306.25L217.90 310.00M215.25 304.84L217.90 310.00L212.74 312.65M225.60 323.75L213.10 319.40M215.63 324.62L213.10 319.40L218.32 316.87M238.75 323.75L230.00 313.50M229.54 319.28L230.00 313.50L235.78 313.96M258.75 329.75L246.25 325.00M248.63 330.29L246.25 325.00L251.54 322.62M271.90 323.75L266.90 311.50M264.65 316.85L266.90 311.50L272.25 313.75M291.90 300.60L286.90 288.50M284.68 293.86L286.90 288.50L292.26 290.72M304.60 290.60L301.50 278.50M298.54 283.49L301.50 278.50L306.49 281.46M317.75 283.50L314.60 271.50M311.67 276.51L314.60 271.50L319.61 274.43M336.50 280.00L336.50 267.25M332.40 271.35L336.50 267.25L340.60 271.35M349.50 283.75L349.50 271.25M345.40 275.35L349.50 271.25L353.60 275.35M356.50 280.00L356.50 267.25M352.40 271.35L356.50 267.25L360.60 271.35M369.60 267.75L366.60 255.25M363.57 260.20L366.60 255.25L371.55 258.28M382.50 312.50L382.50 300.00M378.40 304.10L382.50 300.00L386.60 304.10M395.50 276.90L395.50 264.40M391.40 268.50L395.50 264.40L399.60 268.50M402.50 263.75L402.50 251.25M398.40 255.35L402.50 251.25L406.60 255.35M415.60 260.60L412.50 248.40M409.54 253.38L412.50 248.40L417.48 251.36M428.50 276.90L425.40 264.40M422.41 269.37L425.40 264.40L430.37 267.39M434.40 276.90L438.10 264.40M433.00 267.17L438.10 264.40L440.87 269.50M447.50 260.60L447.50 248.40M443.40 252.50L447.50 248.40L451.60 252.50M461.50 279.70L463.10 267.30M458.51 270.84L463.10 267.30L466.64 271.89M480.60 329.00L474.40 339.00M480.05 337.68L474.40 339.00L473.08 333.35M493.40 312.75L495.00 300.25M490.41 303.80L495.00 300.25L498.55 304.84" fill="none" stroke="#ffff00" stroke-width="1"/>
</g>
<g filter="url(#crisp)">
<text x="68" y="23" class="y">  7357                   76.72S  162.97E   150M</text>
<text x="68" y="36" class="y">01 May 2015/120000UTC - 04 May 2015/000000UTC</text>
<text x="60.5" y="448" class="y">06</text>
<text x="99.5" y="448" class="y">12</text>
<text x="138.5" y="448" class="y">18</text>
<text x="177.5" y="448" class="y">00</text>
<text x="216.5" y="448" class="y">06</text>
<text x="256.5" y="448" class="y">12</text>
<text x="295.5" y="448" class="y">18</text>
<text x="334.5" y="448" class="y">00</text>
<text x="373.5" y="448" class="y">06</text>
<text x="412.5" y="448" class="y">12</text>
<text x="452.5" y="448" class="y">18</text>
<text x="491.5" y="448" class="y">00</text>
<text x="530.5" y="448" class="y">06</text>
<text x="160.5" y="461" class="y">02 May</text>
<text x="317.5" y="461" class="y">03 May</text>
<text x="474.5" y="461" class="y">04 May</text>
<text x="15.5" y="479" class="y">2</text>
<text x="583.3" y="59" class="r" text-anchor="end">0.0</text>
<text x="583.3" y="73" class="r" text-anchor="end">-5.0</text>
<text x="583.3" y="87" class="r" text-anchor="end">-10.0</text>
<text x="583.3" y="101" class="r" text-anchor="end">-15.0</text>
<text x="583.3" y="115" class="r" text-anchor="end">-20.0</text>
<text x="583.3" y="129" class="r" text-anchor="end">-25.0</text>
<text x="583.3" y="142" class="r" text-anchor="end">-30.0</text>
<text x="583.3" y="159" class="r" text-anchor="end">1000.0</text>
<text x="583.3" y="175" class="r" text-anchor="end">900.0</text>
<text x="583.3" y="191" class="r" text-anchor="end">800.0</text>
<text x="583.3" y="207" class="r" text-anchor="end">700.0</text>
<text x="583.3" y="223" class="r" text-anchor="end">600.0</text>
<text x="583.3" y="239" class="r" text-anchor="end">500.0</text>
<text x="583.3" y="272" class="r" text-anchor="end">10.0</text>
<text x="583.3" y="304" class="r" text-anchor="end">5.0</text>
<text x="583.3" y="336" class="r" text-anchor="end">0.0</text>
<text x="583.3" y="356" class="r" text-anchor="end">80.0</text>
<text x="583.3" y="375" class="r" text-anchor="end">70.0</text>
<text x="583.3" y="395" class="r" text-anchor="end">60.0</text>
<text x="583.3" y="414" class="r" text-anchor="end">50.0</text>
<text x="583.3" y="433" class="r" text-anchor="end">40.0</text>
<text x="588.5" y="93" class="r">T(C)</text>
<text x="588.5" y="190" class="r">Pre (mb)</text>
<text x="588.5" y="287" class="r">SPD(MPS)</text>
<text x="588.5" y="384" class="r">RH(%)</text>
</g>
</svg>
</body></html>
